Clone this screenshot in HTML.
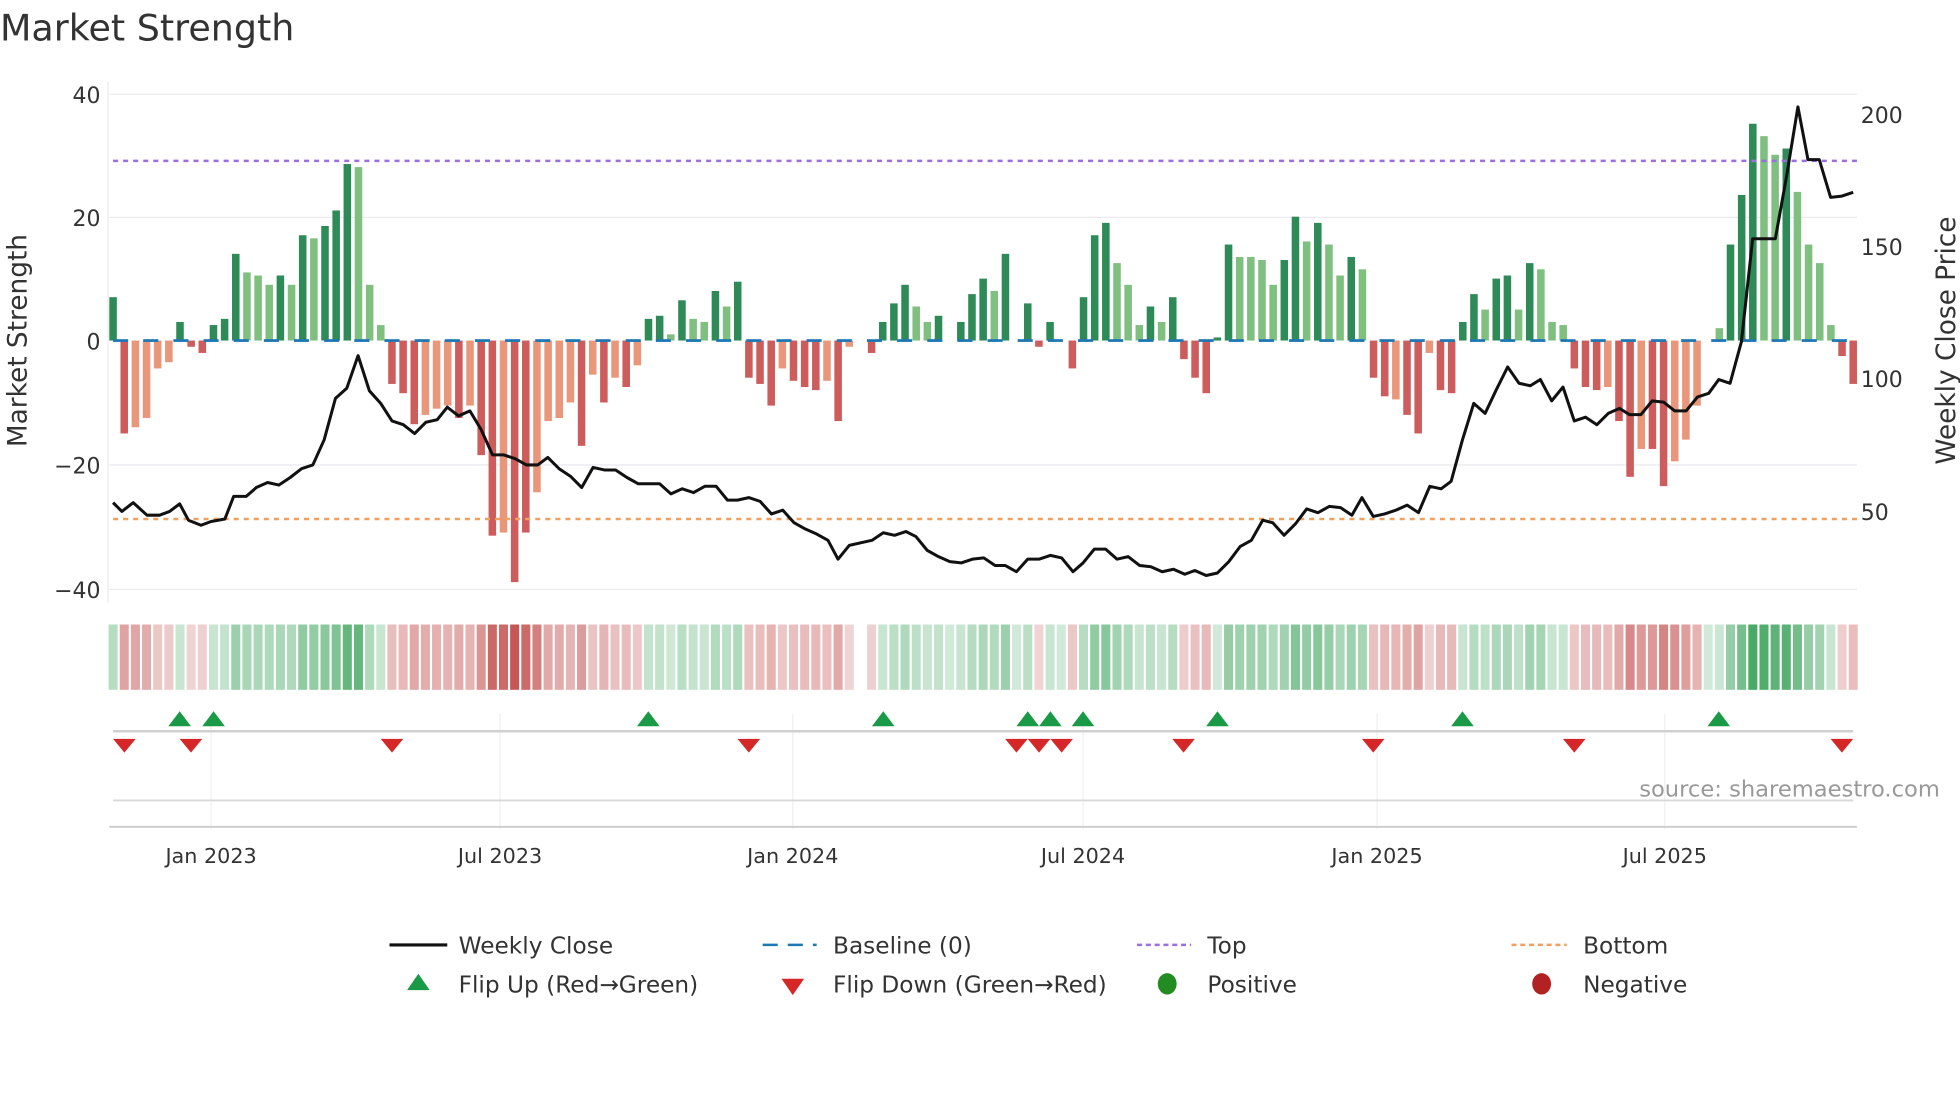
<!DOCTYPE html>
<html><head><meta charset="utf-8"><style>
html,body{margin:0;padding:0;background:#fff;width:1960px;height:1102px;overflow:hidden}
svg{display:block}
text{font-family:"DejaVu Sans","Liberation Sans",sans-serif;fill:#333}
</style></head><body>
<svg id="s" width="1960" height="1102" viewBox="0 0 1560 877" xmlns="http://www.w3.org/2000/svg">
<text x="0" y="32" font-size="29" fill="#333">Market Strength</text>
<g stroke="#ececf0" stroke-width="1">
<line x1="87" x2="1478" y1="75" y2="75"/><line x1="87" x2="1478" y1="173" y2="173"/>
<line x1="87" x2="1478" y1="370" y2="370"/><line x1="87" x2="1478" y1="469" y2="469"/>
<line x1="86" x2="86" y1="65" y2="480"/>
</g>
<g stroke="#eef0f2" stroke-width="1">
<line x1="168" x2="168" y1="568" y2="660"/><line x1="398" x2="398" y1="568" y2="660"/>
<line x1="631" x2="631" y1="568" y2="660"/><line x1="862" x2="862" y1="568" y2="660"/>
<line x1="1096" x2="1096" y1="568" y2="660"/><line x1="1325" x2="1325" y1="568" y2="660"/>
</g>
<g font-size="17.5" text-anchor="end">
<text x="80" y="82">40</text><text x="80" y="180">20</text><text x="80" y="278">0</text>
<text x="80" y="377">−20</text><text x="80" y="476">−40</text>
</g>
<g font-size="17.5">
<text x="1481" y="98">200</text><text x="1481" y="203">150</text><text x="1481" y="308">100</text><text x="1481" y="414">50</text>
</g>
<text transform="translate(21,271) rotate(-90)" font-size="21" text-anchor="middle">Market Strength</text>
<text transform="translate(1556,271) rotate(-90)" font-size="21" text-anchor="middle">Weekly Close Price</text>
<g id="bars"></g>
<line x1="90" x2="1478" y1="128" y2="128" stroke="#9b6fe0" stroke-width="2" stroke-dasharray="4,4"/>
<line x1="90" x2="1478" y1="413" y2="413" stroke="#f0a060" stroke-width="2" stroke-dasharray="4,4"/>
<g id="base"></g>
<polyline id="price" fill="none" stroke="#111" stroke-width="2.4" stroke-linejoin="round"/>
<g id="strip"></g>
<line x1="90" x2="1475" y1="582" y2="582" stroke="#d0d0d0" stroke-width="2"/>
<line x1="90" x2="1475" y1="637" y2="637" stroke="#d8d8d8" stroke-width="1.5"/>
<line x1="87" x2="1478" y1="658" y2="658" stroke="#ccc" stroke-width="1.5"/>
<g id="marks"></g>
<text x="1544" y="634" font-size="18" fill="#999" text-anchor="end" style="fill:#999">source: sharemaestro.com</text>
<g font-size="16.5" text-anchor="middle">
<text x="168" y="687">Jan 2023</text><text x="398" y="687">Jul 2023</text><text x="631" y="687">Jan 2024</text>
<text x="862" y="687">Jul 2024</text><text x="1096" y="687">Jan 2025</text><text x="1325" y="687">Jul 2025</text>
</g>
<g font-size="18.5">
<line x1="310" x2="356" y1="752" y2="752" stroke="#111" stroke-width="2.5"/><text x="365" y="759">Weekly Close</text>
<line x1="607" x2="650" y1="752" y2="752" stroke="#1f77b4" stroke-width="2" stroke-dasharray="12,8"/><text x="663" y="759">Baseline (0)</text>
<line x1="905" x2="948" y1="752" y2="752" stroke="#9b6fe0" stroke-width="2" stroke-dasharray="4,3"/><text x="961" y="759">Top</text>
<line x1="1203" x2="1247" y1="752" y2="752" stroke="#f0a060" stroke-width="2" stroke-dasharray="4,3"/><text x="1260" y="759">Bottom</text>
<polygon points="324,788 342,788 333,775" fill="#1a9a46"/><text x="365" y="790">Flip Up (Red→Green)</text>
<polygon points="622,779 640,779 631,792" fill="#d62728"/><text x="663" y="790">Flip Down (Green→Red)</text>
<ellipse cx="929" cy="783" rx="7.5" ry="8.5" fill="#228b22"/><text x="961" y="790">Positive</text>
<ellipse cx="1227" cy="783" rx="7.5" ry="8.5" fill="#b22222"/><text x="1260" y="790">Negative</text>
</g>
</svg>
<script>
var V=[[7,1],[-15,1],[-14,0],[-12.5,0],[-4.5,0],[-3.5,0],[3,1],[-1,1],[-2,1],[2.5,1],[3.5,1],[14,1],[11,0],[10.5,0],[9,0],[10.5,1],[9,0],[17,1],[16.5,0],[18.5,1],[21,1],[28.5,1],[28,0],[9,0],[2.5,0],
[-7,1],[-8.5,1],[-13.5,1],[-12,0],[-11,0],[-10.5,0],[-12.5,1],[-10.5,0],[-18.5,1],[-31.5,1],[-31,0],[-39,1],[-31,1],[-24.5,0],[-13,0],[-12.5,0],[-10,0],[-17,1],[-5.5,0],[-10,1],[-6,0],[-7.5,1],[-4,0],
[3.5,1],[4,1],[1,0],[6.5,1],[3.5,0],[3,0],[8,1],[5.5,0],[9.5,1],[-6,1],[-7,1],[-10.5,1],[-4.5,0],[-6.5,1],[-7.5,1],[-8,1],[-6.5,0],[-13,1],[-1,0],[0,0],[-2,1],
[3,1],[6,1],[9,1],[5.5,0],[3,0],[4,1],[0.3,0],[3,1],[7.5,1],[10,1],[8,0],[14,1],[0.3,0],[6,1],[-1,1],[3,1],[0.3,0],[-4.5,1],[7,1],[17,1],[19,1],[12.5,0],[9,0],[2.5,0],[5.5,1],[3,0],[7,1],
[-3,1],[-6,1],[-8.5,1],[0.5,1],[15.5,1],[13.5,0],[13.5,0],[13,0],[9,0],[13,1],[20,1],[16,0],[19,1],[15.5,0],[10.5,0],[13.5,1],[11.5,0],
[-6,1],[-9,1],[-9.5,0],[-12,1],[-15,1],[-2,0],[-8,1],[-8.5,1],[3,1],[7.5,1],[5,0],[10,1],[10.5,1],[5,0],[12.5,1],[11.5,0],[3,0],[2.5,0],
[-4.5,1],[-7.5,1],[-8,1],[-7.5,0],[-13,1],[-22,1],[-17.5,0],[-17.5,1],[-23.5,1],[-19.5,0],[-16,0],[-10.5,0],[0.3,0],[2,0],[15.5,1],[23.5,1],[35,1],[33,0],[30,0],[31,1],[24,0],[15.5,0],[12.5,0],[2.5,0],[-2.5,1],[-7,1]];
var NS="http://www.w3.org/2000/svg";
function el(p,t,a){var e=document.createElementNS(NS,t);for(var k in a)e.setAttribute(k,a[k]);document.getElementById(p).appendChild(e);return e;}
var step=(1475-90)/156,Z=271,K=4.93;
V.forEach(function(b,i){var v=b[0],x=90+step*i;
 if(Math.abs(v)>0.4){var h=Math.abs(v)*K;var c=v>0?(b[1]?"#2e8b57":"#7fbf7f"):(b[1]?"#cd5c5c":"#e9967a");
 el("bars","rect",{x:x-3,y:v>0?Z-h:Z,width:6,height:h,fill:c});}
 if(i==67)return;
 var a=Math.min(1,Math.abs(v)/36);var op=0.22+0.7*a;
 var col=v>=0?"#35a055":"#c04a48";
 el("strip","rect",{x:x-3.6,y:497,width:7.2,height:52,fill:col,"fill-opacity":op.toFixed(2)});
});
for(var x=90;x<1478;x+=24)el("base","line",{x1:x,x2:Math.min(x+12,1478),y1:271,y2:271,stroke:"#1f77b4","stroke-width":2.2});
var P=[90,400,97,407,106,400,117,410,127,410,135,407,143,401,150,414,160,418,168,415,179,413,186,395,196,395,204,388,213,384,222,386,231,380,240,373,249,370,258,350,267,317,276,309,285,283,294,311,303,321,312,335,321,338,330,345,339,336,348,334,356,324,365,331,374,327,383,342,392,362,401,362,410,365,419,370,428,370,436,364,445,373,454,379,463,388,472,372,481,374,490,374,499,380,508,385,516,385,525,385,534,393,543,389,552,392,561,387,570,387,579,398,587,398,596,396,605,399,614,409,623,406,632,416,641,421,650,425,659,430,667,445,676,434,685,432,694,430,703,424,712,426,721,423,729,427,738,438,747,443,756,447,765,448,774,445,783,444,792,450,800,450,809,455,818,445,827,445,836,442,845,444,854,455,862,448,871,437,880,437,889,445,898,443,907,450,916,451,925,455,934,453,943,457,951,454,960,458,969,456,978,447,987,435,996,430,1005,414,1013,416,1022,426,1031,417,1040,405,1049,408,1058,403,1067,404,1076,410,1084,396,1093,411,1102,409,1111,406,1120,402,1129,408,1138,387,1147,389,1155,383,1164,350,1173,321,1182,329,1191,310,1200,292,1209,305,1218,307,1226,302,1235,319,1244,308,1253,335,1262,332,1271,338,1280,329,1289,325,1297,330,1306,330,1315,319,1324,320,1333,327,1342,327,1351,316,1360,313,1368,302,1377,305,1386,272,1395,190,1404,190,1413,190,1422,140,1431,85,1439,127,1448,127,1457,157,1466,156,1475,153];
var s="";for(var i=0;i<P.length;i+=2)s+=P[i]+","+P[i+1]+" ";document.getElementById("price").setAttribute("points",s);
[143,170,516,703,818,836,862,969,1164,1368].forEach(function(x){el("marks","polygon",{points:(x-9)+",578 "+(x+9)+",578 "+x+",566",fill:"#1a9a46"});});
[99,152,312,596,809,827,845,942,1093,1253,1466].forEach(function(x){el("marks","polygon",{points:(x-9)+",588 "+(x+9)+",588 "+x+",599",fill:"#d62728"});});
</script>
</body></html>
